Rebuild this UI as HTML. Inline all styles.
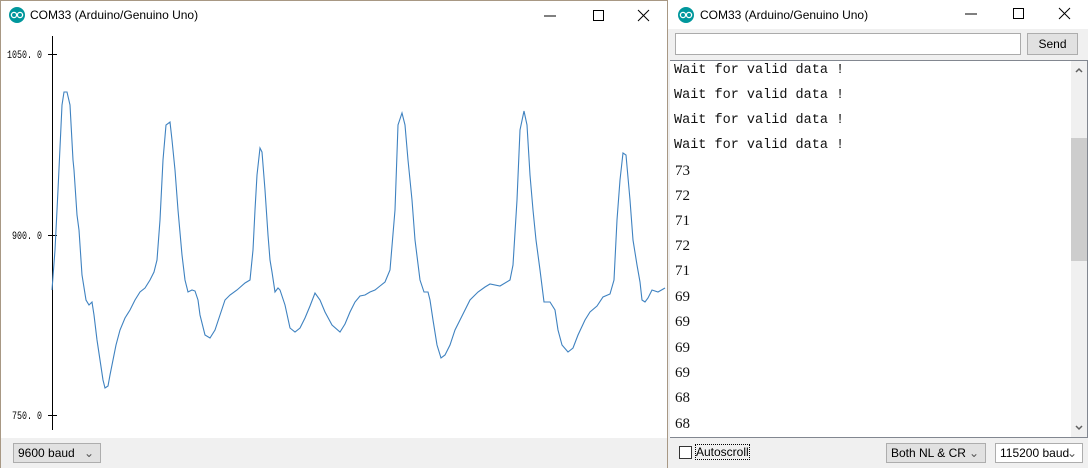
<!DOCTYPE html>
<html><head><style>
body{margin:0;width:1088px;height:468px;overflow:hidden;position:relative;background:#fff;font-family:"Liberation Sans",sans-serif;}
.abs{position:absolute;}
.title{font-size:12px;color:#000;}
.dd{border:1px solid #adadad;background:#e1e1e1;font-size:12px;height:20px;box-sizing:border-box;line-height:18px;padding-left:4px;}
.mono{font-family:"Liberation Mono",monospace;font-size:13.5px;color:#111;}
.num{font-family:"Liberation Serif",serif;font-size:15px;color:#111;}
</style></head><body>
<div class="abs" style="left:0;top:0;width:1px;height:468px;background:#a89884"></div>
<div class="abs" style="left:0;top:0;width:668px;height:1px;background:#a89884"></div>
<div class="abs" style="left:667px;top:0;width:1px;height:468px;background:#a89884"></div>
<svg class="abs" style="left:9px;top:7px" width="16" height="16"><circle cx="8" cy="8" r="8" fill="#00979c"/><circle cx="5" cy="8" r="2.6" fill="none" stroke="#fff" stroke-width="1.3"/><circle cx="11" cy="8" r="2.6" fill="none" stroke="#fff" stroke-width="1.3"/></svg>
<div class="abs title" style="left:30px;top:8px">COM33 (Arduino/Genuino Uno)</div>
<svg class="abs" style="left:540px;top:8px" width="120" height="16"><line x1="4" y1="8" x2="16" y2="8" stroke="#000"/><rect x="53.5" y="2.5" width="10" height="10" fill="none" stroke="#000"/><path d="M98 2 L109 13 M109 2 L98 13" stroke="#000"/></svg>
<svg class="abs" style="left:0;top:0" width="667" height="438">
<line x1="52.5" y1="36" x2="52.5" y2="430" stroke="#000"/>
<line x1="48" y1="54.5" x2="57" y2="54.5" stroke="#000"/>
<line x1="48" y1="235.5" x2="57" y2="235.5" stroke="#000"/>
<line x1="48" y1="415.5" x2="57" y2="415.5" stroke="#000"/>
<text x="7" y="58" font-family="Liberation Mono" font-size="11" textLength="35" lengthAdjust="spacingAndGlyphs">1050. 0</text>
<text x="12" y="239" font-family="Liberation Mono" font-size="11" textLength="30" lengthAdjust="spacingAndGlyphs">900. 0</text>
<text x="12" y="419" font-family="Liberation Mono" font-size="11" textLength="30" lengthAdjust="spacingAndGlyphs">750. 0</text>
<polyline fill="none" stroke="#3f82c0" stroke-width="1.1" points="52,290 55,250 58,190 62,105 64,92 67,92 70,105 73,160 74,170 77,215 79,230 82,275 86,300 89,305 92,302 94,315 97,340 100,360 103,380 105,388 108,386 110,375 113,360 116,345 120,330 125,318 130,310 135,300 140,292 145,288 150,280 154,272 157,260 160,220 163,160 166,125 170,122 172,140 175,170 178,210 182,255 185,280 188,292 192,290 195,291 198,300 200,315 205,335 210,338 215,330 220,315 225,300 230,295 237,290 245,283 250,280 253,250 255,210 257,175 260,148 262,152 265,190 268,235 270,260 272,272 275,292 278,288 280,290 285,305 290,328 295,332 300,328 305,318 310,306 315,293 320,300 325,312 332,325 340,332 345,324 350,312 355,302 360,296 365,295 370,292 375,290 380,286 385,282 390,270 395,210 398,125 402,113 405,125 408,160 412,200 415,240 420,280 424,292 428,292 430,300 433,320 437,345 441,358 445,355 450,345 455,330 460,320 465,310 470,300 478,292 485,287 490,284 500,286 510,280 513,265 517,200 520,130 524,111 527,125 530,175 533,210 536,240 540,270 544,302 550,302 555,310 558,330 562,345 568,352 573,348 578,335 585,320 590,312 597,306 603,297 610,294 614,280 617,220 620,180 623,153 626,155 630,200 633,240 637,265 640,282 642,300 645,302 648,298 652,290 658,292 665,288"/>
</svg>
<div class="abs" style="left:1px;top:438px;width:666px;height:30px;background:#f0f0f0"></div>
<div class="abs dd" style="left:13px;top:443px;width:88px;">9600 baud<span style="position:absolute;right:6px;top:0;color:#555">&#8964;</span></div>
<svg class="abs" style="left:678px;top:7px" width="16" height="16"><circle cx="8" cy="8" r="8" fill="#00979c"/><circle cx="5" cy="8" r="2.6" fill="none" stroke="#fff" stroke-width="1.3"/><circle cx="11" cy="8" r="2.6" fill="none" stroke="#fff" stroke-width="1.3"/></svg>
<div class="abs title" style="left:700px;top:8px">COM33 (Arduino/Genuino Uno)</div>
<svg class="abs" style="left:960px;top:6px" width="120" height="16"><line x1="5" y1="8" x2="17" y2="8" stroke="#000"/><rect x="53.5" y="2.5" width="10" height="10" fill="none" stroke="#000"/><path d="M99 2 L110 13 M110 2 L99 13" stroke="#000"/></svg>
<div class="abs" style="left:668px;top:29px;width:420px;height:439px;background:#f0f0f0"></div>
<div class="abs" style="left:675px;top:33px;width:346px;height:22px;box-sizing:border-box;border:1px solid #ababab;background:#fff"></div>
<div class="abs" style="left:1027px;top:33px;width:51px;height:22px;box-sizing:border-box;border:1px solid #adadad;background:#e1e1e1;font-size:12px;text-align:center;line-height:20px">Send</div>
<div class="abs" style="left:670px;top:60px;width:418px;height:378px;box-sizing:border-box;border:1px solid #828790;border-left:none;background:#fff"></div>
<div class="abs" style="left:1071px;top:61px;width:16px;height:376px;background:#f0f0f0"></div>
<div class="abs" style="left:1071px;top:138px;width:16px;height:123px;background:#cdcdcd"></div>
<svg class="abs" style="left:1071px;top:61px" width="16" height="376"><path d="M5 11 L8 8 L11 11" fill="none" stroke="#606060" stroke-width="1.5"/><path d="M5 365 L8 368 L11 365" fill="none" stroke="#606060" stroke-width="1.5"/></svg>
<div class="abs mono" style="left:674px;top:63px">Wait for valid data !</div>
<div class="abs mono" style="left:674px;top:88px">Wait for valid data !</div>
<div class="abs mono" style="left:674px;top:113px">Wait for valid data !</div>
<div class="abs mono" style="left:674px;top:138px">Wait for valid data !</div>
<div class="abs num" style="left:675px;top:163px">73</div>
<div class="abs num" style="left:675px;top:188px">72</div>
<div class="abs num" style="left:675px;top:213px">71</div>
<div class="abs num" style="left:675px;top:238px">72</div>
<div class="abs num" style="left:675px;top:263px">71</div>
<div class="abs num" style="left:675px;top:289px">69</div>
<div class="abs num" style="left:675px;top:314px">69</div>
<div class="abs num" style="left:675px;top:340px">69</div>
<div class="abs num" style="left:675px;top:365px">69</div>
<div class="abs num" style="left:675px;top:390px">68</div>
<div class="abs num" style="left:675px;top:416px">68</div>
<div class="abs" style="left:679px;top:446px;width:13px;height:13px;box-sizing:border-box;border:1px solid #333;background:#fff"></div>
<div class="abs" style="left:696px;top:445px;font-size:12px;outline:1px dotted #000">Autoscroll</div>
<div class="abs dd" style="left:886px;top:443px;width:100px;">Both NL &amp; CR<span style="position:absolute;right:6px;top:0;color:#555">&#8964;</span></div>
<div class="abs dd" style="left:995px;top:443px;width:88px;background:#fff;border-color:#adadad">115200 baud<span style="position:absolute;right:5px;top:0;color:#555">&#8964;</span></div>
</body></html>
